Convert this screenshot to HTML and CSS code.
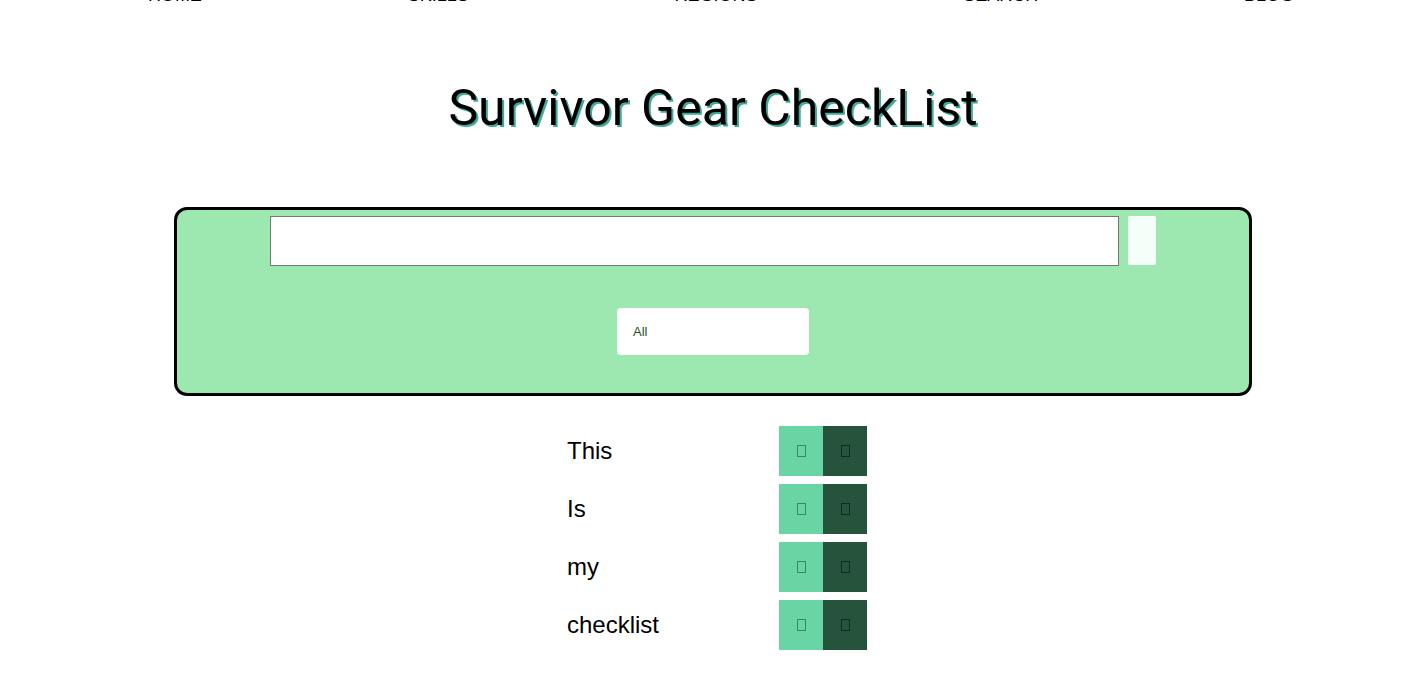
FILE: index.html
```html
<!DOCTYPE html>
<html>
<head>
<meta charset="utf-8">
<link rel="stylesheet" href="styles.css">
</head>
<body>
<nav class="nav">
  <a class="nav-link">Home</a>
  <a class="nav-link">Skills</a>
  <a class="nav-link">Regions</a>
  <a class="nav-link">Search</a>
  <a class="nav-link">Blog</a>
</nav>
<main class="page">
  <h1 class="title">Survivor Gear CheckList</h1>
  <section class="panel">
    <div class="search-row">
      <input class="search-input" type="text">
      <button class="search-btn"></button>
    </div>
    <div class="select-row">
      <div class="select">All</div>
    </div>
  </section>
  <ul class="list">
    <li class="item"><span class="label">This</span><div class="actions"><button class="act act-light"><span class="tofu"></span></button><button class="act act-dark"><span class="tofu"></span></button></div></li>
    <li class="item"><span class="label">Is</span><div class="actions"><button class="act act-light"><span class="tofu"></span></button><button class="act act-dark"><span class="tofu"></span></button></div></li>
    <li class="item"><span class="label">my</span><div class="actions"><button class="act act-light"><span class="tofu"></span></button><button class="act act-dark"><span class="tofu"></span></button></div></li>
    <li class="item"><span class="label">checklist</span><div class="actions"><button class="act act-light"><span class="tofu"></span></button><button class="act act-dark"><span class="tofu"></span></button></div></li>
  </ul>
</main>
</body>
</html>
```
FILE: styles.css
```css
* { box-sizing: border-box; }
html, body { margin: 0; padding: 0; background: #fff; }
body { font-family: "Liberation Sans", Arial, sans-serif; color: #000; overflow: hidden; }

.nav {
  display: flex;
  justify-content: space-around;
  padding: 0 19px 0 45px;
  margin-top: -15px;
  height: 21px;
  align-items: flex-end;
}
.nav-link {
  font-size: 18px;
  line-height: 21px;
  text-transform: uppercase;
  color: #000;
}

.page {
  padding-left: 10px;
}
.title {
  margin: 72px 0 0;
  text-align: center;
  font-family: "Roboto", "Liberation Sans", sans-serif;
  font-weight: 400;
  font-size: 50px;
  line-height: 60px;
  color: #000;
  text-shadow: 2px 2px 0 #3fa99a;
}

.panel {
  width: 1078px;
  height: 189px;
  margin: 69px auto 0;
  background: #9de8b0;
  border: 3px solid #000;
  border-radius: 13px;
  padding-top: 6px;
}
.search-row {
  display: flex;
  justify-content: center;
  gap: 9px;
}
.search-input {
  width: 849px;
  height: 50px;
  border: 1px solid #767676;
  background: #fff;
  margin: 0;
}
.search-btn {
  width: 28px;
  height: 49px;
  border: none;
  border-radius: 2px;
  background: #f5fffa;
  margin: 0;
}
.select-row {
  display: flex;
  justify-content: center;
  margin-top: 42px;
}
.select {
  width: 192px;
  height: 47px;
  background: #fff;
  border-radius: 4px;
  padding-left: 16px;
  font-size: 13px;
  line-height: 47px;
  color: #1f4d33;
}

.list {
  list-style: none;
  margin: 30px 0 0;
  padding: 0 0 0 557px;
  display: flex;
  flex-direction: column;
  gap: 8px;
}
.item {
  display: flex;
  align-items: center;
  height: 50px;
}
.label {
  width: 212px;
  font-size: 24px;
  line-height: 28px;
}
.actions { display: flex; }
.act {
  width: 44px;
  height: 50px;
  border: none;
  margin: 0;
  padding: 0;
  display: flex;
  align-items: center;
  justify-content: center;
}
.act-light { background: #69d5a4; }
.act-dark { background: #26533c; }
.tofu {
  width: 9px;
  height: 12px;
  border: 1px solid rgba(0, 40, 20, 0.45);
  display: block;
}
.act-dark .tofu { border-color: rgba(0, 20, 10, 0.6); }
```
